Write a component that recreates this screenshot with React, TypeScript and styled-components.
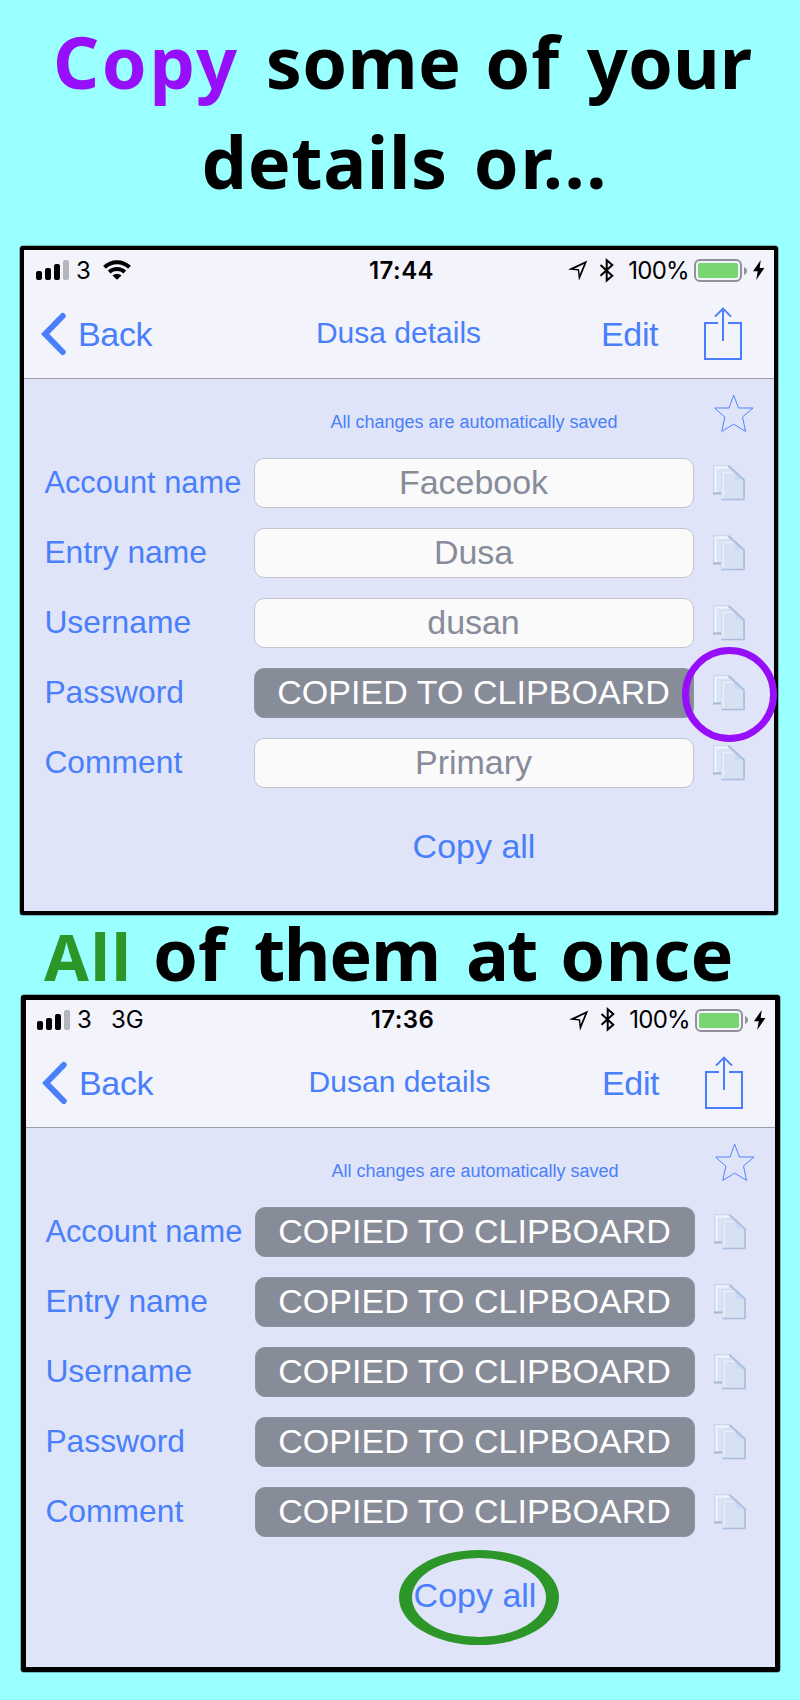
import React from 'react';
import styled, { createGlobalStyle } from 'styled-components';

const BLUE = '#4a7ffb';
const PURPLE = '#960ff8';
const GREEN = '#2c9728';

const GlobalStyle = createGlobalStyle`
  *, *::before, *::after { box-sizing: border-box; }
  body { margin: 0; background: #99ffff; }
`;

const Page = styled.main`
  width: 800px;
  height: 1700px;
  overflow: hidden;
  background: #99ffff;
  font-family: 'Liberation Sans', Arial, sans-serif;
`;

const Intro = styled.header`
  height: 246px;
  padding-top: 11px;
`;

const Headline = styled.h1<{ $left: number; $line: number; $height: number }>`
  display: flex;
  align-items: baseline;
  gap: 24px;
  height: ${(p) => p.$height}px;
  margin: 0;
  padding-left: ${(p) => p.$left}px;
  font: 700 72px/${(p) => p.$line}px 'Noto Sans', 'Open Sans', sans-serif;
  color: #000;
  white-space: nowrap;
`;

const Word = styled.span<{ $spacing?: number; $pull?: number }>`
  letter-spacing: ${(p) => p.$spacing ?? 0}px;
  margin-right: ${(p) => p.$pull ?? 0}px;
`;

const Highlight = styled(Word)<{ $color: string; $size?: number }>`
  color: ${(p) => p.$color};
  font-size: ${(p) => p.$size ?? 72}px;
`;

const Phone = styled.section<{ $left: number; $width: number; $height: number; $border: number }>`
  width: ${(p) => p.$width}px;
  height: ${(p) => p.$height}px;
  margin-left: ${(p) => p.$left}px;
  border: ${(p) => p.$border}px solid #000;
  border-radius: 3px;
  box-shadow: 0 0 0 0.5px rgba(0, 0, 0, 0.55);
  background: #e0e4f8;
`;

const Screen = styled.div<{ $inset: number }>`
  margin-left: ${(p) => -p.$inset}px;
`;

const TopArea = styled.div<{ $inset: number }>`
  height: ${(p) => 129 - p.$inset}px;
  border-bottom: 1px solid #9b9dae;
  background: #f3f3fc;
`;

const StatusBar = styled.div<{ $inset: number }>`
  display: flex;
  align-items: center;
  justify-content: space-between;
  height: ${(p) => 40 - p.$inset}px;
  padding: 1px 9px 0 ${(p) => 12 - p.$inset}px;
  font: 400 24px/30px Inter, sans-serif;
  color: #000;
`;

const StatusGroup = styled.div<{ $width: number; $end?: boolean }>`
  display: flex;
  align-items: center;
  width: ${(p) => p.$width}px;
  ${(p) => p.$end && 'justify-content: flex-end;'}
`;

const Carrier = styled.span`
  width: 27px;
  margin-left: 7px;
`;

const Network = styled.span`
  margin-left: 7px;
`;

const Clock = styled.time`
  margin-left: 2px;
  font-weight: 600;
  letter-spacing: 0.45px;
`;

const Percent = styled.span`
  margin: 0 5px 0 13px;
  letter-spacing: -0.7px;
`;

const Battery = styled.span`
  display: flex;
  width: 48px;
  height: 23px;
  padding: 2px;
  border: 2px solid #919199;
  border-radius: 6px;

  &::before {
    content: '';
    flex: 1;
    border-radius: 2px;
    background: #78d671;
  }
`;

const NavBar = styled.nav<{ $inset: number }>`
  display: grid;
  grid-template-columns: 178px 1fr 126px 46px;
  align-items: center;
  height: 88px;
  padding: 0 24px 0 ${(p) => 17 - p.$inset}px;
  color: ${BLUE};
  font-size: 34px;
  line-height: 40px;
  letter-spacing: -0.35px;
`;

const BackLink = styled.a`
  display: flex;
  align-items: center;
  gap: 12px;
`;

const Title = styled.h2`
  margin: 0 0 2px;
  font-size: 30px;
  font-weight: 400;
  line-height: 36px;
  letter-spacing: 0;
  text-align: center;
  white-space: nowrap;
`;

const EditLink = styled.a`
  padding-left: 23px;
`;

const NoticeRow = styled.div`
  display: grid;
  grid-template-columns: 440px 1fr;
  height: 79px;
  margin-left: 230px;
  color: ${BLUE};
`;

const Notice = styled.p`
  margin: 32px 0 0;
  font-size: 18px;
  line-height: 22px;
  text-align: center;
`;

const StarButton = styled.span`
  display: block;
  margin: 15px 0 0 19px;
  line-height: 0;
`;

const Fields = styled.div`
  display: flex;
  flex-direction: column;
  gap: 20px;
`;

const FieldRow = styled.div`
  display: grid;
  grid-template-columns: 230px 440px 1fr;
  align-items: center;
  height: 50px;
`;

const Label = styled.label<{ $fit?: boolean }>`
  padding: 0 0 ${(p) => (p.$fit ? 1 : 3)}px 20.4px;
  font-size: ${(p) => (p.$fit ? 30.8 : 31.8)}px;
  line-height: 36px;
  color: ${BLUE};
  white-space: nowrap;
`;

const Value = styled.div<{ $copied: boolean }>`
  height: 50px;
  border: 1px solid ${(p) => (p.$copied ? '#9092a2' : '#c3c4d0')};
  border-radius: 10px;
  background: ${(p) => (p.$copied ? '#878c99' : '#fafafa')};
  color: ${(p) => (p.$copied ? '#fff' : '#878c9a')};
  font-size: 34px;
  line-height: 46px;
  letter-spacing: ${(p) => (p.$copied ? 0.05 : -0.05)}px;
  text-align: center;
  text-indent: -1px;
  white-space: nowrap;
`;

const CopyButton = styled.span`
  position: relative;
  width: 32px;
  height: 36px;
  margin-left: 19px;
  line-height: 0;
`;

const CircleMark = styled.span`
  position: absolute;
  left: -31px;
  top: -28px;
  width: 95px;
  height: 95px;
  border: 7.5px solid ${PURPLE};
  border-radius: 50%;
`;

const CopyAll = styled.div`
  position: relative;
  width: 440px;
  margin: 40px 0 0 230px;
`;

const CopyAllText = styled.a`
  display: block;
  height: 36px;
  overflow: hidden;
  color: ${BLUE};
  font-size: 34px;
  line-height: 36px;
  text-align: center;
`;

const EllipseMark = styled.span`
  position: absolute;
  left: 144px;
  top: -27px;
  width: 159.5px;
  height: 95px;
  border: solid ${GREEN};
  border-width: 8px 13px;
  border-radius: 50%;
`;

const Icon = styled.svg<{ $gap?: number; $shift?: number }>`
  display: block;
  flex: none;
  margin-left: ${(p) => p.$gap ?? 0}px;
  margin-top: ${(p) => p.$shift ?? 0}px;
`;

const SignalIcon = () => (
  <Icon width="33" height="20" viewBox="0 0 33 20" $shift={-1}>
    <rect x="0" y="11" width="6" height="9" rx="2" />
    <rect x="9" y="8" width="6" height="12" rx="2" />
    <rect x="18" y="4" width="6" height="16" rx="2" />
    <rect x="27" y="0" width="6" height="20" rx="2" fill="#b5b5bc" />
  </Icon>
);

const WifiIcon = () => (
  <Icon width="28" height="20" viewBox="0 0 28 20" $shift={-1} fill="none" stroke="#000">
    <path d="M1.5 7.3C8.5 .5 19.5 .5 26.5 7.3" strokeWidth="4" />
    <path d="M6.2 12C10.5 8 17.5 8 21.8 12" strokeWidth="3.8" />
    <path d="M14 19.7L9.5 15.5Q14 12 18.5 15.5Z" fill="#000" stroke="none" />
  </Icon>
);

const LocationIcon = () => (
  <Icon width="20" height="21" viewBox="0 0 20 21">
    <path fillRule="evenodd" d="M0 9.6L19.3 .5L11 20.8L9.8 10.5ZM6.2 8.7L11.1 9.2L11.7 14.4L16 4.1Z" />
  </Icon>
);

const BluetoothIcon = () => (
  <Icon width="16" height="25" viewBox="0 0 16 25" $gap={11} $shift={-1} fill="none" stroke="#000" strokeWidth="2">
    <path d="M1.5 7L13.3 17.7L7.7 22.6V2.2L13.3 7L1.5 17.7" />
  </Icon>
);

const NubIcon = () => (
  <Icon width="3" height="8" viewBox="0 0 3 8" $gap={2}>
    <path d="M0 0C4 1.5 4 6.5 0 8Z" fill="#919199" />
  </Icon>
);

const BoltIcon = () => (
  <Icon width="12" height="20" viewBox="0 0 12 20" $gap={6} $shift={-1}>
    <path d="M7.7 0L0 11.2H4.7L3.2 20L11.4 8H6.7Z" />
  </Icon>
);

const ChevronIcon = () => (
  <Icon width="25" height="44" viewBox="0 0 25 44">
    <path d="M21.7 4L4.2 22L21.7 40" fill="none" stroke={BLUE} strokeWidth="6" strokeLinecap="round" strokeLinejoin="miter" />
  </Icon>
);

const ShareIcon = () => (
  <Icon width="40" height="54" viewBox="0 0 40 54" $shift={-1} fill="none" stroke={BLUE} strokeWidth="2">
    <path d="M14 16H1V52H37V16H24M19 34V2M11 9.6L19 1.6L27 9.6" />
  </Icon>
);

const StarIcon = () => (
  <Icon width="41" height="40" viewBox="0 0 41 40" fill="none" stroke={BLUE} strokeWidth="0.95">
    <path d="M20.7 1.2L25.5 14H40L29.5 23L32.5 37.4L20.7 30.2L8.8 37.4L11.8 23L2 14.6V14H16Z" strokeLinejoin="round" />
  </Icon>
);

const CopyIcon = () => (
  <Icon width="32" height="36" viewBox="0 0 32 36">
    <path d="M.7 .7H16L25 9V28.8H.7Z" fill="#dae5f4" stroke="#cbd7ee" strokeWidth="1.4" />
    <path d="M2.5 28V2.5H15" fill="none" stroke="#eef6ff" strokeWidth="1.8" />
    <path d="M0 28.4H8" stroke="#a9b7d5" strokeWidth="2" />
    <path d="M8.7 5.7H22L31 14.5V34.8H8.7Z" fill="#d6e2f1" stroke="#d0dcef" strokeWidth="1" />
    <path d="M10.3 33.5V7.3H20" fill="none" stroke="#e6f0fb" strokeWidth="1.6" />
    <path d="M22 6.5V14.5H30.5Z" fill="#c4dcf8" />
    <path d="M15.5 1L31 15V34.5H8.5" fill="none" stroke="#aebddc" strokeWidth="1.7" />
  </Icon>
);

const COPIED = 'COPIED TO CLIPBOARD';

type Entry = { label: string; value: string; marked?: boolean };

const firstEntries: Entry[] = [
  { label: 'Account name', value: 'Facebook' },
  { label: 'Entry name', value: 'Dusa' },
  { label: 'Username', value: 'dusan' },
  { label: 'Password', value: COPIED, marked: true },
  { label: 'Comment', value: 'Primary' },
];

const secondEntries: Entry[] = firstEntries.map(({ label }) => ({ label, value: COPIED }));

type DetailsProps = {
  time: string;
  title: string;
  network: React.ReactNode;
  entries: Entry[];
  inset?: number;
  markCopyAll?: boolean;
};

function Details({ time, title, network, entries, inset = 0, markCopyAll }: DetailsProps) {
  return (
    <>
      <TopArea $inset={inset}>
        <StatusBar $inset={inset}>
          <StatusGroup $width={290}>
            <SignalIcon />
            <Carrier>3</Carrier>
            {network}
          </StatusGroup>
          <Clock>{time}</Clock>
          <StatusGroup $width={290} $end>
            <LocationIcon />
            <BluetoothIcon />
            <Percent>100%</Percent>
            <Battery />
            <NubIcon />
            <BoltIcon />
          </StatusGroup>
        </StatusBar>
        <NavBar $inset={inset}>
          <BackLink>
            <ChevronIcon />
            Back
          </BackLink>
          <Title>{title}</Title>
          <EditLink>Edit</EditLink>
          <ShareIcon />
        </NavBar>
      </TopArea>
      <Screen $inset={inset}>
        <NoticeRow>
          <Notice>All changes are automatically saved</Notice>
          <StarButton>
            <StarIcon />
          </StarButton>
        </NoticeRow>
        <Fields>
          {entries.map((e) => (
            <FieldRow key={e.label}>
              <Label $fit={e.label === 'Account name'}>{e.label}</Label>
              <Value $copied={e.value === COPIED}>{e.value}</Value>
              <CopyButton>
                <CopyIcon />
                {e.marked && <CircleMark />}
              </CopyButton>
            </FieldRow>
          ))}
        </Fields>
        <CopyAll>
          <CopyAllText>Copy all</CopyAllText>
          {markCopyAll && <EllipseMark />}
        </CopyAll>
      </Screen>
    </>
  );
}

export default function App() {
  return (
    <Page>
      <GlobalStyle />
      <Intro>
        <Headline $left={53} $line={100} $height={100}>
          <Highlight $spacing={2.6} $pull={2} $color={PURPLE}>Copy</Highlight>
          <Word $spacing={0.3}>some</Word>
          <Word $spacing={0.8} $pull={3}>of</Word>
          <Word>your</Word>
        </Headline>
        <Headline $left={201.6} $line={100} $height={100}>
          <Word $spacing={0.6} $pull={2}>details</Word>
          <Word $spacing={1.6}>or...</Word>
        </Headline>
      </Intro>
      <Phone $left={20} $width={758} $height={669} $border={4}>
        <Details
          time="17:44"
          title="Dusa details"
          network={<WifiIcon />}
          entries={firstEntries}
        />
      </Phone>
      <Headline $left={44} $line={76} $height={80}>
        <Highlight $spacing={1.6} $color={GREEN} $size={65} $pull={-3.5}>All</Highlight>
        <Word $pull={4}>of</Word>
        <Word $spacing={-1.3} $pull={2}>them</Word>
        <Word $spacing={-2}>at</Word>
        <Word $spacing={0.4}>once</Word>
      </Headline>
      <Phone $left={21} $width={759} $height={677} $border={5}>
        <Details
          time="17:36"
          title="Dusan details"
          network={<Network>3G</Network>}
          entries={secondEntries}
          inset={1}
          markCopyAll
        />
      </Phone>
    </Page>
  );
}
